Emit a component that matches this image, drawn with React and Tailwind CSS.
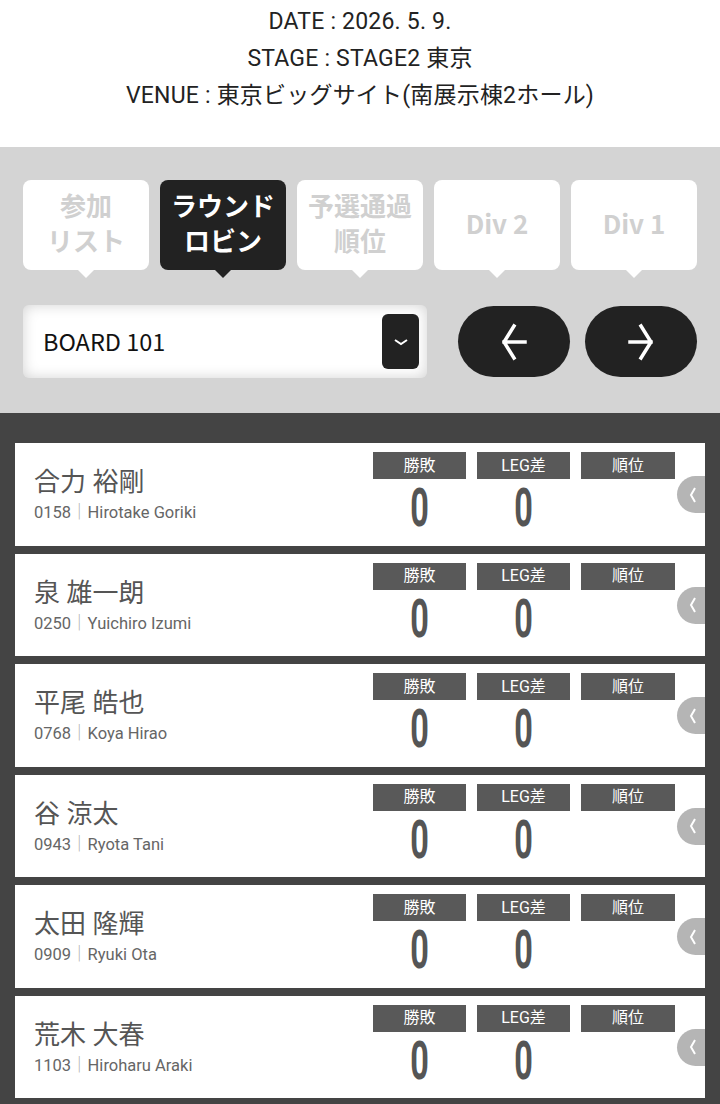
import React from 'react';

const tabs = [
  { label: ['参加', 'リスト'], active: false },
  { label: ['ラウンド', 'ロビン'], active: true },
  { label: ['予選通過', '順位'], active: false },
  { label: ['Div 2'], active: false },
  { label: ['Div 1'], active: false },
];

const players = [
  { name: '合力 裕剛', no: '0158', en: 'Hirotake Goriki' },
  { name: '泉 雄一朗', no: '0250', en: 'Yuichiro Izumi' },
  { name: '平尾 皓也', no: '0768', en: 'Koya Hirao' },
  { name: '谷 涼太', no: '0943', en: 'Ryota Tani' },
  { name: '太田 隆輝', no: '0909', en: 'Ryuki Ota' },
  { name: '荒木 大春', no: '1103', en: 'Hiroharu Araki' },
];

const font = { fontFamily: 'Roboto, "Noto Sans CJK JP", sans-serif' };
const cjk = { fontFamily: '"Noto Sans CJK JP", sans-serif' };

const ArrowLeft = () => (
  <svg width="26" height="38" viewBox="0 0 26 38" fill="none" stroke="white" strokeWidth="3.5" strokeLinecap="square">
    <path d="M13 3 L3 19 L13 35 M3 19 H24" />
  </svg>
);

const ArrowRight = () => (
  <svg width="26" height="38" viewBox="0 0 26 38" fill="none" stroke="white" strokeWidth="3.5" strokeLinecap="square">
    <path d="M13 3 L23 19 L13 35 M23 19 H2" />
  </svg>
);

const PlayerCard = ({ p }) => (
  <div className="relative h-[102.5px] bg-white flex">
    <div className="flex-1 pl-[19px] pt-[21px]">
      <p className="text-[26px] leading-[36px] text-[#555]">{p.name}</p>
      <p className="text-[16.5px] leading-[24px] text-[#666] mt-[1px]">
        {p.no}
        <span className="text-[#aaa]">｜</span>
        {p.en}
      </p>
    </div>
    <div className="pt-[9px] pr-[30px] grid grid-cols-[93px_93px_94px] gap-x-[11px] content-start">
      {['勝敗', 'LEG差', '順位'].map((h) => (
        <div key={h} className="h-[27px] bg-[#595959] text-white text-[16px] flex items-center justify-center">
          {h}
        </div>
      ))}
      <div className="flex justify-center mt-[4px]">
        <span className="text-[54px] leading-[50px] font-bold text-[#555] scale-x-[0.6] inline-block">0</span>
      </div>
      <div className="flex justify-center mt-[4px]">
        <span className="text-[54px] leading-[50px] font-bold text-[#555] scale-x-[0.6] inline-block">0</span>
      </div>
      <div />
    </div>
    <div className="absolute right-0 top-[33px] w-[28px] h-[37px] bg-[#b5b5b5] rounded-l-full flex items-center justify-center pl-[4px]">
      <svg width="8" height="16" viewBox="0 0 8 16" fill="none" stroke="white" strokeWidth="2">
        <path d="M6 1 L2 8 L6 15" />
      </svg>
    </div>
  </div>
);

export default function App() {
  return (
    <div className="w-[720px] min-h-[1104px] bg-[#444444]" style={font}>
      {/* header */}
      <div className="h-[147px] bg-white pt-[3px] text-center text-[23px] leading-[37px] tracking-[0.2px] text-[#222]">
        <p>DATE : 2026. 5. 9.</p>
        <p>STAGE : STAGE2 東京</p>
        <p>VENUE : 東京ビッグサイト(南展示棟2ホール)</p>
      </div>

      {/* controls */}
      <div className="bg-[#d4d4d4] px-[23px] pt-[33px] pb-[35px]">
        <div className="flex gap-[11px]" style={cjk}>
          {tabs.map((t, i) => (
            <div key={i} className="relative w-[126px]">
              <div
                className={`h-[90px] rounded-[8px] flex flex-col items-center justify-center pb-[6px] text-[26px] leading-[35px] font-bold ${
                  t.active ? 'bg-[#222] text-white' : 'bg-white text-[#d0d0d0]'
                }`}
              >
                {t.label.map((l) => (
                  <span key={l}>{l}</span>
                ))}
              </div>
              <div
                className={`mx-auto w-0 h-0 border-x-[8px] border-t-[8px] border-x-transparent ${
                  t.active ? 'border-t-[#222]' : 'border-t-white'
                }`}
              />
            </div>
          ))}
        </div>

        <div className="flex items-center mt-[27px]">
          <div className="w-[404px] h-[73px] rounded-[6px] bg-white shadow-[inset_0_0_14px_rgba(0,0,0,0.18)] flex items-center justify-between pl-[20px] pr-[8px]">
            <span className="text-[23.5px] text-[#111]" style={cjk}>BOARD 101</span>
            <div className="w-[37px] h-[55px] rounded-[6px] bg-[#222] flex items-center justify-center">
              <svg width="14" height="8" viewBox="0 0 14 8" fill="none" stroke="white" strokeWidth="2">
                <path d="M1 2 L7 6 L13 2" />
              </svg>
            </div>
          </div>
          <button className="ml-[31px] w-[112px] h-[71px] rounded-full bg-[#222] flex items-center justify-center">
            <ArrowLeft />
          </button>
          <button className="ml-[15px] w-[112px] h-[71px] rounded-full bg-[#222] flex items-center justify-center">
            <ArrowRight />
          </button>
        </div>
      </div>

      {/* list */}
      <div className="px-[15px] pt-[30px] flex flex-col gap-[8px]">
        {players.map((p) => (
          <PlayerCard key={p.no} p={p} />
        ))}
      </div>
    </div>
  );
}
